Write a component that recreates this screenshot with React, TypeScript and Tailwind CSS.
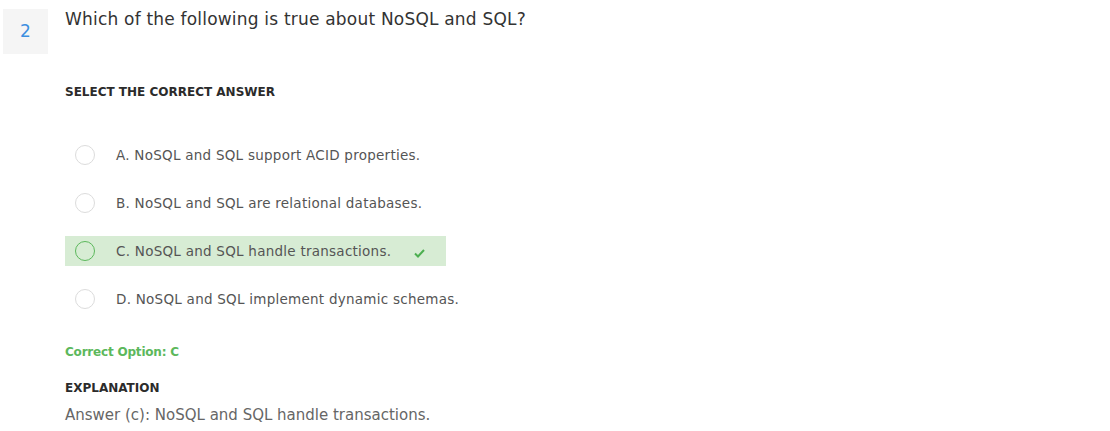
import React from 'react';

const options = [
  { key: 'A', text: 'NoSQL and SQL support ACID properties.' },
  { key: 'B', text: 'NoSQL and SQL are relational databases.' },
  { key: 'C', text: 'NoSQL and SQL handle transactions.' },
  { key: 'D', text: 'NoSQL and SQL implement dynamic schemas.' },
];

const correct = 'C';

function CheckIcon() {
  return (
    <svg width="11" height="9" viewBox="0 0 11 9" fill="none">
      <path d="M1 4.5L4 7.5L10 1" stroke="#4caf50" strokeWidth="2" />
    </svg>
  );
}

export default function App() {
  return (
    <div
      className="min-h-screen bg-white flex items-start pl-[3px] pt-[7px]"
      style={{ fontFamily: '"DejaVu Sans", "Open Sans", sans-serif' }}
    >
      {/* question number */}
      <div className="mt-[2px] w-[45px] h-[45px] bg-[#f5f5f5] flex items-center justify-center text-[17px] text-[#3d8fe0] shrink-0">
        2
      </div>

      <div className="ml-[17px] flex flex-col">
        <h2 className="text-[17px] leading-[24px] text-[#333] tracking-[0.2px]">
          Which of the following is true about NoSQL and SQL?
        </h2>

        <p className="mt-[53px] text-[12px] leading-[16px] font-bold text-[#2b2b2b]">
          SELECT THE CORRECT ANSWER
        </p>

        <div className="mt-[40px] flex flex-col gap-[18px]">
          {options.map((o) => {
            const isCorrect = o.key === correct;
            return (
              <div
                key={o.key}
                className={`w-[381px] h-[30px] flex items-center pl-[10px] whitespace-nowrap ${isCorrect ? 'bg-[#d7ecd4]' : ''}`}
              >
                <span
                  className={`w-[20px] h-[20px] rounded-full border shrink-0 ${isCorrect ? 'border-[#5cb85c]' : 'border-[#dcdcdc] bg-white'}`}
                />
                <span className="ml-[21px] text-[13.5px] tracking-[0.25px] text-[#555] shrink-0">
                  {o.key}. {o.text}
                </span>
                {isCorrect && (
                  <span className="ml-[23px] mt-[4px] flex shrink-0">
                    <CheckIcon />
                  </span>
                )}
              </div>
            );
          })}
        </div>

        <p className="mt-[30px] text-[12px] leading-[16px] font-semibold text-[#5cb85c] tracking-[-0.2px]">
          Correct Option: C
        </p>

        <p className="mt-[20px] text-[12px] leading-[16px] font-bold text-[#2b2b2b]">
          EXPLANATION
        </p>

        <p className="mt-[9px] text-[15px] leading-[20px] text-[#666]">
          Answer (c): NoSQL and SQL handle transactions.
        </p>
      </div>
    </div>
  );
}
